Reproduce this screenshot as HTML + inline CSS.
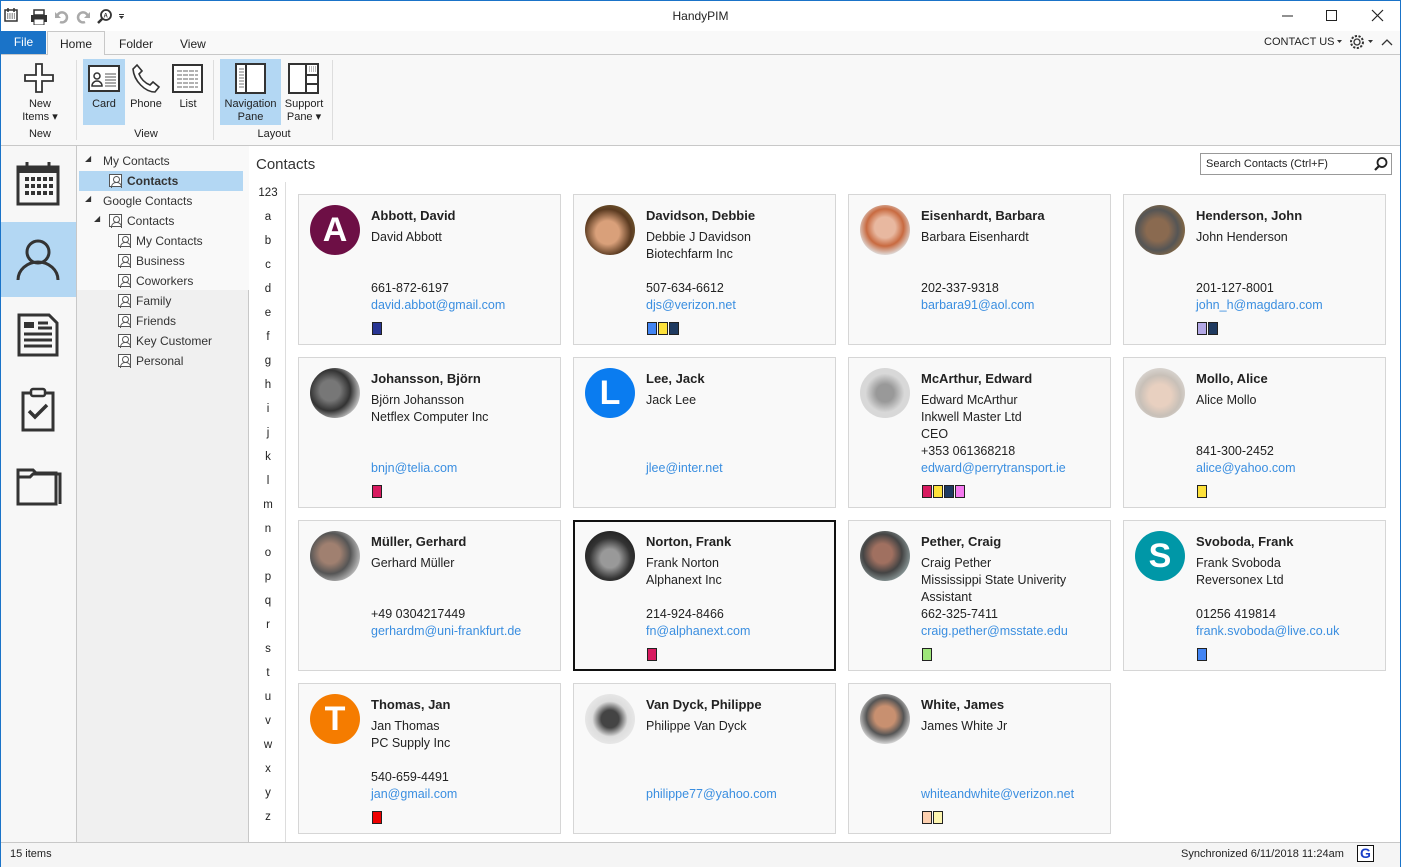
<!DOCTYPE html>
<html><head><meta charset="utf-8">
<style>
*{box-sizing:border-box;margin:0;padding:0}
body{width:1401px;height:867px;overflow:hidden;font-family:"Liberation Sans",sans-serif;font-size:12px;color:#222;background:#fff;position:relative}
.a{position:absolute}
.card{position:absolute;width:263px;height:151px;border:1px solid #d6d6d6;background:#f9f9f9}
.card.sel{border:2px solid #111}
.av{position:absolute;left:11px;top:10px;width:50px;height:50px;border-radius:50%;color:#fff;font-weight:bold;font-size:34px;text-align:center;line-height:50px}
.tx{position:absolute;left:72px;top:12px;font-size:12.5px;line-height:17px;white-space:nowrap}
.tx b{display:block;font-size:13px;margin-bottom:5px}
.tx div{height:17px}
.tx .e{color:#3a8ee0}
.sq{position:absolute;left:73px;top:127px;display:flex;gap:1px}
.sq i{display:block;width:10px;height:13px;border:1px solid #222}
.tree div{position:absolute;font-size:12px;white-space:nowrap;color:#333}
.pi{display:inline-block;width:13px;height:13px;border:1px solid #555;vertical-align:-2px;margin-right:5px;background:#fff;position:relative}
.pi:before{content:"";position:absolute;left:3px;top:1px;width:5px;height:5px;border:1px solid #555;border-radius:50%}
.pi:after{content:"";position:absolute;left:1px;top:7px;width:9px;height:5px;border:1px solid #555;border-bottom:none;border-radius:5px 5px 0 0}
.alpha div{position:absolute;left:0;width:36px;text-align:center;font-size:11.5px;color:#222}
</style></head><body>
<!-- window border -->
<div class="a" style="left:0;top:0;width:1px;height:867px;background:#1a73c8"></div>
<div class="a" style="right:0;top:0;width:1px;height:867px;background:#1a73c8"></div>
<div class="a" style="left:0;top:0;width:1401px;height:1px;background:#1a73c8"></div>
<!-- title bar -->
<svg class="a" style="left:4px;top:7px" width="125" height="18" viewBox="0 0 125 18">
<rect x="1" y="3" width="12" height="11" fill="none" stroke="#333" stroke-width="1.5"/><line x1="4" y1="1" x2="4" y2="5" stroke="#333" stroke-width="1.5"/><line x1="10" y1="1" x2="10" y2="5" stroke="#333" stroke-width="1.5"/><path d="M3 7h8M3 9h8M3 11h8" stroke="#333" stroke-dasharray="1.3 1"/>
<rect x="27" y="8" width="16" height="7" fill="#333"/><rect x="30" y="3" width="10" height="5" fill="none" stroke="#333" stroke-width="1.5"/><rect x="30" y="12" width="10" height="6" fill="#fff" stroke="#333"/>
<path d="M53 11a5 5 0 1 1 3 4" fill="none" stroke="#aaa" stroke-width="2.5"/><path d="M51 5v6h6z" fill="#aaa"/>
<path d="M84 11a5 5 0 1 0 -3 4" fill="none" stroke="#aaa" stroke-width="2.5"/><path d="M86 5v6h-6z" fill="#aaa"/>
<circle cx="102" cy="8" r="5" fill="none" stroke="#333" stroke-width="1.8"/><line x1="98" y1="12" x2="94" y2="16" stroke="#333" stroke-width="2.5"/><text x="99.5" y="10.5" font-size="6" font-weight="bold" fill="#333" font-family="Liberation Sans">A</text>
<path d="M115 9h5l-2.5 3z" fill="#333"/><rect x="115" y="7" width="5" height="1" fill="#333"/>
</svg>
<div class="a" style="left:0;top:9px;width:1401px;text-align:center;font-size:12px;color:#222">HandyPIM</div>
<svg class="a" style="left:1280px;top:8px" width="110" height="16"><line x1="2" y1="8" x2="13" y2="8" stroke="#222"/><rect x="46.5" y="2.5" width="10" height="10" fill="none" stroke="#222"/><path d="M92 2l11 11M103 2l-11 11" stroke="#222" stroke-width="1.2"/></svg>
<!-- tab row -->
<div class="a" style="left:1px;top:31px;width:1399px;height:24px;background:#f9f9f9;border-bottom:1px solid #c8c8c8"></div>
<div class="a" style="left:1px;top:31px;width:45px;height:23px;background:#1a73c8;color:#fff;text-align:center;line-height:23px;font-size:12px">File</div>
<div class="a" style="left:47px;top:31px;width:58px;height:25px;background:#f8f8f8;border:1px solid #c8c8c8;border-bottom:none;text-align:center;line-height:24px;font-size:12px">Home</div>
<div class="a" style="left:119px;top:37px;font-size:12px">Folder</div>
<div class="a" style="left:180px;top:37px;font-size:12px">View</div>
<div class="a" style="left:1264px;top:36px;font-size:11px">CONTACT US</div>
<svg class="a" style="left:1335px;top:34px" width="64" height="16"><path d="M2 6h5l-2.5 3z" fill="#333"/><circle cx="22" cy="8" r="3" fill="none" stroke="#333" stroke-width="1.3"/><circle cx="22" cy="8" r="6" fill="none" stroke="#333" stroke-width="2" stroke-dasharray="2.2 1.5"/><path d="M33 6h5l-2.5 3z" fill="#333"/><path d="M47 11l5-5 5 5" fill="none" stroke="#333" stroke-width="1.3"/></svg>
<!-- ribbon -->
<div class="a" style="left:1px;top:55px;width:1399px;height:91px;background:#f8f8f8;border-bottom:1px solid #c8c8c8"></div>
<svg class="a" style="left:24px;top:63px" width="32" height="32"><path d="M12 1h6v11h11v6H18v11h-6V18H1v-6h11z" fill="#fff" stroke="#333" stroke-width="1.8"/></svg>
<div class="a" style="left:10px;top:98px;width:60px;text-align:center;font-size:11px;line-height:13px">New<br>Items ▾</div>
<div class="a" style="left:10px;top:128px;width:60px;text-align:center;font-size:11px">New</div>
<div class="a" style="left:76px;top:60px;width:1px;height:80px;background:#ddd"></div>
<div class="a" style="left:83px;top:59px;width:42px;height:66px;background:#b3d7f3"></div>
<svg class="a" style="left:88px;top:64px" width="32" height="30"><rect x="1" y="2" width="30" height="25" fill="#fff" stroke="#333" stroke-width="2"/><circle cx="9" cy="12" r="3" fill="none" stroke="#333" stroke-width="1.5"/><path d="M4 22a5 5 0 0 1 10 0z" fill="none" stroke="#333" stroke-width="1.5"/><path d="M17 10h11M17 13h11M17 16h11M17 19h11M17 22h11" stroke="#555"/></svg>
<div class="a" style="left:83px;top:98px;width:42px;text-align:center;font-size:11px">Card</div>
<svg class="a" style="left:131px;top:63px" width="32" height="32"><path d="M6 2l5 6-3 3c2 5 6 9 11 11l3-3 6 5-4 5C14 29 3 18 2 6z" fill="#fff" stroke="#333" stroke-width="1.6"/></svg>
<div class="a" style="left:125px;top:98px;width:42px;text-align:center;font-size:11px">Phone</div>
<svg class="a" style="left:172px;top:64px" width="32" height="30"><rect x="1" y="1" width="29" height="27" fill="#fff" stroke="#333" stroke-width="2"/><path d="M5 7h21M5 11h21M5 15h21M5 19h21M5 23h21" stroke="#666" stroke-dasharray="5 1"/></svg>
<div class="a" style="left:167px;top:98px;width:42px;text-align:center;font-size:11px">List</div>
<div class="a" style="left:83px;top:128px;width:126px;text-align:center;font-size:11px">View</div>
<div class="a" style="left:213px;top:60px;width:1px;height:80px;background:#ddd"></div>
<div class="a" style="left:220px;top:59px;width:61px;height:66px;background:#b3d7f3"></div>
<svg class="a" style="left:235px;top:63px" width="32" height="32"><rect x="1" y="1" width="29" height="29" fill="#fff" stroke="#333" stroke-width="2"/><line x1="11" y1="1" x2="11" y2="30" stroke="#333" stroke-width="2"/><path d="M4 6h5M4 9h5M4 12h5M4 15h5M4 18h5M4 21h5M4 24h5" stroke="#777"/></svg>
<div class="a" style="left:218px;top:98px;width:65px;text-align:center;font-size:11px;line-height:13px">Navigation<br>Pane</div>
<svg class="a" style="left:288px;top:63px" width="32" height="32"><rect x="1" y="1" width="29" height="29" fill="#fff" stroke="#333" stroke-width="2"/><line x1="18" y1="1" x2="18" y2="30" stroke="#333" stroke-width="2"/><path d="M18 12h12M18 21h12" stroke="#333" stroke-width="2"/><path d="M21 4h7M21 6h7M21 8h7" stroke="#777" stroke-dasharray="1 1"/></svg>
<div class="a" style="left:280px;top:98px;width:48px;text-align:center;font-size:11px;line-height:13px">Support<br>Pane ▾</div>
<div class="a" style="left:218px;top:128px;width:112px;text-align:center;font-size:11px">Layout</div>
<div class="a" style="left:332px;top:60px;width:1px;height:80px;background:#ddd"></div>
<!-- left nav -->
<div class="a" style="left:1px;top:146px;width:76px;height:696px;background:#f7f7f7;border-right:1px solid #c8c8c8"></div>
<div class="a" style="left:1px;top:222px;width:75px;height:75px;background:#b3d7f3"></div>
<svg class="a" style="left:16px;top:160px" width="46" height="46"><rect x="2" y="7" width="40" height="37" fill="none" stroke="#333" stroke-width="3"/><rect x="2" y="7" width="40" height="6" fill="#333"/><path d="M11 2v8M33 2v8" stroke="#333" stroke-width="3"/><g fill="#333"><rect x="9" y="17" width="4" height="4"/><rect x="15" y="17" width="4" height="4"/><rect x="21" y="17" width="4" height="4"/><rect x="27" y="17" width="4" height="4"/><rect x="33" y="17" width="4" height="4"/><rect x="9" y="24" width="4" height="4"/><rect x="15" y="24" width="4" height="4"/><rect x="21" y="24" width="4" height="4"/><rect x="27" y="24" width="4" height="4"/><rect x="33" y="24" width="4" height="4"/><rect x="9" y="31" width="4" height="4"/><rect x="15" y="31" width="4" height="4"/><rect x="21" y="31" width="4" height="4"/><rect x="27" y="31" width="4" height="4"/><rect x="33" y="31" width="4" height="4"/></g></svg>
<svg class="a" style="left:16px;top:236px" width="46" height="48"><circle cx="22" cy="16" r="11" fill="none" stroke="#333" stroke-width="3"/><path d="M2 44a20 18 0 0 1 40 0" fill="none" stroke="#333" stroke-width="3"/></svg>
<svg class="a" style="left:17px;top:313px" width="44" height="44"><path d="M2 2h30l8 8v32H2z" fill="none" stroke="#333" stroke-width="3"/><rect x="7" y="9" width="10" height="6" fill="#333"/><path d="M21 10h10M21 15h14M7 21h28M7 27h28M7 33h28" stroke="#333" stroke-width="3"/></svg>
<svg class="a" style="left:21px;top:387px" width="36" height="46"><rect x="2" y="6" width="30" height="37" fill="none" stroke="#333" stroke-width="3"/><rect x="10" y="2" width="14" height="7" rx="2" fill="#f7f7f7" stroke="#333" stroke-width="2.5"/><path d="M8 24l6 6 12-12" fill="none" stroke="#333" stroke-width="3.5"/></svg>
<svg class="a" style="left:16px;top:464px" width="46" height="42"><path d="M2 6h15l3 3h20v31H2z" fill="none" stroke="#333" stroke-width="3"/><path d="M2 13h12l3-3h27v30" fill="none" stroke="#333" stroke-width="3"/></svg>
<!-- tree -->
<div class="a" style="left:77px;top:146px;width:172px;height:696px;background:#f0f0f0;border-right:1px solid #c8c8c8"></div>
<div class="a" style="left:77px;top:146px;width:172px;height:144px;background:#f9f9f9"></div>
<div class="a" style="left:79px;top:171px;width:164px;height:20px;background:#b3d7f3"></div>
<div class="tree">
<div style="left:85px;top:154px;font-size:8px">◢</div><div style="left:103px;top:154px">My Contacts</div>
<div style="left:109px;top:174px;font-weight:bold"><span class="pi"></span>Contacts</div>
<div style="left:85px;top:194px;font-size:8px">◢</div><div style="left:103px;top:194px">Google Contacts</div>
<div style="left:94px;top:214px;font-size:8px">◢</div><div style="left:109px;top:214px"><span class="pi"></span>Contacts</div>
<div style="left:118px;top:234px"><span class="pi"></span>My Contacts</div>
<div style="left:118px;top:254px"><span class="pi"></span>Business</div>
<div style="left:118px;top:274px"><span class="pi"></span>Coworkers</div>
<div style="left:118px;top:294px"><span class="pi"></span>Family</div>
<div style="left:118px;top:314px"><span class="pi"></span>Friends</div>
<div style="left:118px;top:334px"><span class="pi"></span>Key Customer</div>
<div style="left:118px;top:354px"><span class="pi"></span>Personal</div>
</div>
<!-- content header -->
<div class="a" style="left:250px;top:146px;width:1150px;height:36px;background:#fff"></div>
<div class="a" style="left:256px;top:156px;font-size:15px;color:#333">Contacts</div>
<div class="a" style="left:1200px;top:153px;width:192px;height:22px;border:1px solid #999;background:#fff;font-size:11px;padding:4px 5px">Search Contacts (Ctrl+F)</div>
<svg class="a" style="left:1373px;top:156px" width="16" height="16"><circle cx="9" cy="6.5" r="4.5" fill="none" stroke="#222" stroke-width="1.8"/><line x1="6" y1="10" x2="2" y2="14" stroke="#222" stroke-width="2.2"/></svg>
<!-- alphabet -->
<div class="a alpha" style="left:250px;top:182px;width:36px;height:660px;background:#fff;border-right:1px solid #ddd">
<div style="top:5px">123</div><div style="top:29px">a</div><div style="top:53px">b</div><div style="top:77px">c</div><div style="top:101px">d</div><div style="top:125px">e</div><div style="top:149px">f</div><div style="top:173px">g</div><div style="top:197px">h</div><div style="top:221px">i</div><div style="top:245px">j</div><div style="top:269px">k</div><div style="top:293px">l</div><div style="top:317px">m</div><div style="top:341px">n</div><div style="top:365px">o</div><div style="top:389px">p</div><div style="top:413px">q</div><div style="top:437px">r</div><div style="top:461px">s</div><div style="top:485px">t</div><div style="top:509px">u</div><div style="top:533px">v</div><div style="top:557px">w</div><div style="top:581px">x</div><div style="top:605px">y</div><div style="top:629px">z</div>
</div>
<div class="a" style="left:287px;top:182px;width:1113px;height:660px;background:#fff"></div>

<!-- cards row 1 -->
<div class="card" style="left:298px;top:194px"><div class="av" style="background:#6d0f45">A</div><div class="tx"><b>Abbott, David</b><div>David Abbott</div><div></div><div></div><div>661-872-6197</div><div class="e">david.abbot@gmail.com</div></div><div class="sq"><i style="background:#283593"></i></div></div>
<div class="card" style="left:573px;top:194px"><div class="av" style="background:radial-gradient(circle at 45% 55%,#d9a07a 0 30%,#5a3a20 60%,#8a7a40)"></div><div class="tx"><b>Davidson, Debbie</b><div>Debbie J Davidson</div><div>Biotechfarm Inc</div><div></div><div>507-634-6612</div><div class="e">djs@verizon.net</div></div><div class="sq"><i style="background:#4285f4"></i><i style="background:#fde13a"></i><i style="background:#1f3a60"></i></div></div>
<div class="card" style="left:848px;top:194px"><div class="av" style="background:radial-gradient(circle at 50% 45%,#e8b8a0 0 28%,#c86a40 50%,#e0e0e0 75%)"></div><div class="tx"><b>Eisenhardt, Barbara</b><div>Barbara Eisenhardt</div><div></div><div></div><div>202-337-9318</div><div class="e">barbara91@aol.com</div></div></div>
<div class="card" style="left:1123px;top:194px"><div class="av" style="background:radial-gradient(circle at 45% 50%,#8a6a50 0 30%,#555 55%,#c08030)"></div><div class="tx"><b>Henderson, John</b><div>John Henderson</div><div></div><div></div><div>201-127-8001</div><div class="e">john_h@magdaro.com</div></div><div class="sq"><i style="background:#b3a8e6"></i><i style="background:#1f3a60"></i></div></div>
<!-- row 2 -->
<div class="card" style="left:298px;top:357px"><div class="av" style="background:radial-gradient(circle at 40% 45%,#777 0 25%,#333 50%,#ddd 80%)"></div><div class="tx"><b>Johansson, Björn</b><div>Björn Johansson</div><div>Netflex Computer Inc</div><div></div><div></div><div class="e">bnjn@telia.com</div></div><div class="sq"><i style="background:#d81b60"></i></div></div>
<div class="card" style="left:573px;top:357px"><div class="av" style="background:#0a7cf0">L</div><div class="tx"><b>Lee, Jack</b><div>Jack Lee</div><div></div><div></div><div></div><div class="e">jlee@inter.net</div></div></div>
<div class="card" style="left:848px;top:357px"><div class="av" style="background:radial-gradient(circle at 50% 50%,#999 0 25%,#d8d8d8 55%)"></div><div class="tx"><b>McArthur, Edward</b><div>Edward McArthur</div><div>Inkwell Master Ltd</div><div>CEO</div><div>+353 061368218</div><div class="e">edward@perrytransport.ie</div></div><div class="sq"><i style="background:#d81b60"></i><i style="background:#fde13a"></i><i style="background:#1f3a60"></i><i style="background:#f57af0"></i></div></div>
<div class="card" style="left:1123px;top:357px"><div class="av" style="background:radial-gradient(circle at 50% 55%,#e8d0c0 0 30%,#c8c0b8 55%,#eee)"></div><div class="tx"><b>Mollo, Alice</b><div>Alice Mollo</div><div></div><div></div><div>841-300-2452</div><div class="e">alice@yahoo.com</div></div><div class="sq"><i style="background:#fde13a"></i></div></div>
<!-- row 3 -->
<div class="card" style="left:298px;top:520px"><div class="av" style="background:radial-gradient(circle at 40% 45%,#a08070 0 25%,#555 50%,#ccc 80%)"></div><div class="tx"><b>Müller, Gerhard</b><div>Gerhard Müller</div><div></div><div></div><div>+49 0304217449</div><div class="e">gerhardm@uni-frankfurt.de</div></div></div>
<div class="card sel" style="left:573px;top:520px"><div class="av" style="left:10px;top:9px;background:radial-gradient(circle at 50% 55%,#999 0 25%,#333 55%,#111)"></div><div class="tx" style="left:71px;top:11px"><b>Norton, Frank</b><div>Frank Norton</div><div>Alphanext Inc</div><div></div><div>214-924-8466</div><div class="e">fn@alphanext.com</div></div><div class="sq" style="left:72px;top:126px"><i style="background:#d81b60"></i></div></div>
<div class="card" style="left:848px;top:520px"><div class="av" style="background:radial-gradient(circle at 45% 45%,#a07060 0 25%,#444 50%,#9aa 80%)"></div><div class="tx"><b>Pether, Craig</b><div>Craig Pether</div><div>Mississippi State Univerity</div><div>Assistant</div><div>662-325-7411</div><div class="e">craig.pether@msstate.edu</div></div><div class="sq"><i style="background:#9ee67a"></i></div></div>
<div class="card" style="left:1123px;top:520px"><div class="av" style="background:#0097a7">S</div><div class="tx"><b>Svoboda, Frank</b><div>Frank Svoboda</div><div>Reversonex Ltd</div><div></div><div>01256 419814</div><div class="e">frank.svoboda@live.co.uk</div></div><div class="sq"><i style="background:#4285f4"></i></div></div>
<!-- row 4 -->
<div class="card" style="left:298px;top:683px"><div class="av" style="background:#f57c00">T</div><div class="tx"><b>Thomas, Jan</b><div>Jan Thomas</div><div>PC Supply Inc</div><div></div><div>540-659-4491</div><div class="e">jan@gmail.com</div></div><div class="sq"><i style="background:#e00"></i></div></div>
<div class="card" style="left:573px;top:683px"><div class="av" style="background:radial-gradient(circle at 50% 50%,#444 0 25%,#ddd 50%,#f4f4f4)"></div><div class="tx"><b>Van Dyck, Philippe</b><div>Philippe Van Dyck</div><div></div><div></div><div></div><div class="e">philippe77@yahoo.com</div></div></div>
<div class="card" style="left:848px;top:683px"><div class="av" style="background:radial-gradient(circle at 50% 45%,#c89070 0 28%,#555 50%,#ddd 75%)"></div><div class="tx"><b>White, James</b><div>James White Jr</div><div></div><div></div><div></div><div class="e">whiteandwhite@verizon.net</div></div><div class="sq"><i style="background:#fdd0b0"></i><i style="background:#fdf5b0"></i></div></div>

<!-- status bar -->
<div class="a" style="left:1px;top:842px;width:1399px;height:25px;background:#f5f5f5;border-top:1px solid #c8c8c8"></div>
<div class="a" style="left:10px;top:848px;font-size:11px">15 items</div>
<div class="a" style="left:1181px;top:848px;font-size:11px">Synchronized 6/11/2018 11:24am</div>
<div class="a" style="left:1357px;top:845px;width:17px;height:17px;border:1px solid #111;background:#fff;color:#1a3fc8;font-weight:bold;font-size:14px;text-align:center;line-height:15px">G</div>
</body></html>
